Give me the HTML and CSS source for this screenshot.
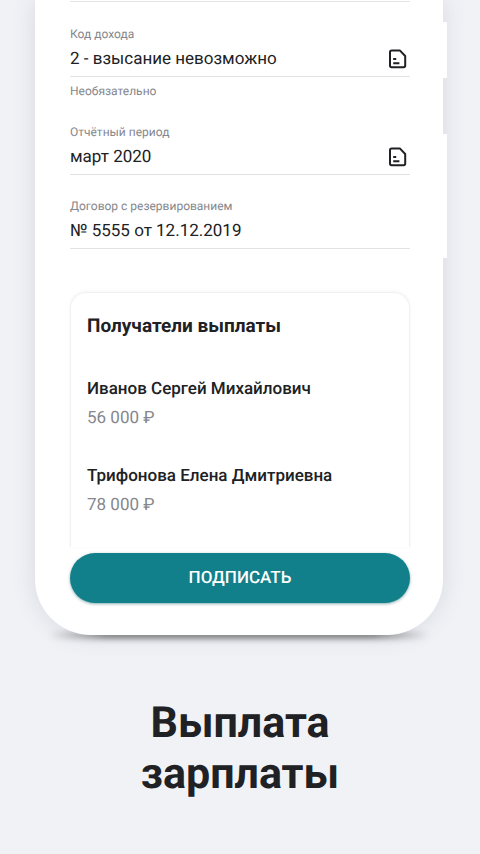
FILE: index.html
```html
<!DOCTYPE html>
<html lang="ru">
<head>
  <meta charset="utf-8">
  <meta name="viewport" content="width=device-width, initial-scale=1">
  <title>Выплата зарплаты</title>
  <link rel="stylesheet" href="styles.css">
</head>
<body>
  <main class="page">
    <form class="phone">
      <span class="side-key side-key-top"></span>
      <span class="side-key side-key-bottom"></span>
      <div class="fields">
        <div class="field">
          <label class="label" for="income">Код дохода</label>
          <div class="control">
            <input class="input" id="income" type="text" value="2 - взысание невозможно">
            <button class="pick" type="button" aria-label="Выбрать код дохода">
              <svg class="icon" viewBox="0 0 20 20"><path d="M3.6 1.4H11.8L17.2 7V16.6Q17.2 18.2 15.6 18.2H3.6Q2 18.2 2 16.6V3Q2 1.4 3.6 1.4Z"/><path d="M5.2 10.1H8.2M5.2 14.2H11.4"/></svg>
            </button>
          </div>
          <p class="hint">Необязательно</p>
        </div>
        <div class="field">
          <label class="label" for="period">Отчётный период</label>
          <div class="control">
            <input class="input" id="period" type="text" value="март 2020">
            <button class="pick" type="button" aria-label="Выбрать период">
              <svg class="icon" viewBox="0 0 20 20"><path d="M3.6 1.4H11.8L17.2 7V16.6Q17.2 18.2 15.6 18.2H3.6Q2 18.2 2 16.6V3Q2 1.4 3.6 1.4Z"/><path d="M5.2 10.1H8.2M5.2 14.2H11.4"/></svg>
            </button>
          </div>
        </div>
        <div class="field">
          <label class="label" for="contract">Договор с резервированием</label>
          <div class="control">
            <input class="input" id="contract" type="text" value="№ 5555 от 12.12.2019">
          </div>
        </div>
      </div>
      <section class="card">
        <h2 class="card-title">Получатели выплаты</h2>
        <ul class="people">
          <li class="person">
            <p class="name">Иванов Сергей Михайлович</p>
            <p class="amount">56 000 ₽</p>
          </li>
          <li class="person">
            <p class="name">Трифонова Елена Дмитриевна</p>
            <p class="amount">78 000 ₽</p>
          </li>
        </ul>
      </section>
      <button class="submit" type="button">ПОДПИСАТЬ</button>
    </form>
    <h1 class="headline">Выплата<br>зарплаты</h1>
  </main>
</body>
</html>
```
FILE: styles.css
```css
* {
  box-sizing: border-box;
  margin: 0;
  padding: 0;
}

body {
  min-height: 100vh;
  background: #f1f2f6;
  color: #202124;
  font-family: Roboto, "Liberation Sans", sans-serif;
  text-rendering: geometricPrecision;
  overflow-x: hidden;
}

.phone {
  position: relative;
  margin: 0 37px 0 35px;
  padding: 1px 33px 32px 35px;
  background: #fff;
  border-radius: 0 0 56px 56px;
  box-shadow: 0 0 24px rgba(60, 70, 85, 0.14);
}

/* Contact shadow under the flat part of the lower edge */
.phone::before {
  content: "";
  position: absolute;
  z-index: -1;
  right: 14px;
  bottom: -3px;
  left: 14px;
  height: 6px;
  background: linear-gradient(90deg, transparent, #666 15%, #666 85%, transparent);
  filter: blur(3px);
}

.side-key {
  position: absolute;
  right: -4px;
  width: 4px;
  background: #fff;
  border-radius: 0 1px 1px 0;
}

.side-key-top {
  top: 22px;
  height: 56px;
}

.side-key-bottom {
  top: 134px;
  height: 124px;
}

.fields {
  display: flex;
  flex-direction: column;
  gap: 23px;
  padding-top: 24px;
  border-top: 1px solid #e4e5e7;
}

.label,
.hint {
  display: block;
  color: #85878c;
  font-size: 12px;
  line-height: 16px;
}

.hint {
  padding: 6px 0 2px;
}

.control {
  display: flex;
  align-items: center;
  height: 35px;
  border-bottom: 1px solid #e1e2e4;
}

.input {
  flex: 1;
  min-width: 0;
  border: 0;
  outline: 0;
  background: none;
  color: inherit;
  font: 17px/24px Roboto, "Liberation Sans", sans-serif;
  text-rendering: inherit;
}

.pick {
  width: 24px;
  height: 24px;
  border: 0;
  background: none;
}

.icon {
  display: block;
  width: 24px;
  height: 24px;
  padding: 2px;
  fill: none;
  stroke: #202124;
  stroke-width: 2;
  stroke-linejoin: round;
}

.card {
  margin-top: 43px;
  padding: 21px 16px 30px;
  border: 1px solid #f0f0f1;
  border-bottom: 0;
  border-radius: 16px 16px 0 0;
  box-shadow: 0 -1px 4px rgba(0, 0, 0, 0.04);
}

.card-title {
  font-size: 19px;
  font-weight: 700;
  line-height: 24px;
}

.people {
  display: flex;
  flex-direction: column;
  gap: 34px;
  margin-top: 39px;
  list-style: none;
}

.person {
  display: flex;
  flex-direction: column;
  gap: 5px;
}

.name,
.amount {
  font-size: 17px;
  line-height: 24px;
}

.name {
  font-weight: 500;
}

.amount {
  color: #85878c;
}

.submit {
  display: block;
  position: relative;
  width: 100%;
  height: 50px;
  margin-top: 6px;
  border: 0;
  border-radius: 25px;
  background: #11808a;
  box-shadow: 0 1px 3px rgba(17, 90, 100, 0.5);
  color: #fff;
  font: 500 17px/24px Roboto, "Liberation Sans", sans-serif;
  text-rendering: inherit;
}

.headline {
  padding: 63px 16px 0;
  font-size: 43px;
  font-weight: 700;
  line-height: 51px;
  text-align: center;
}
```
